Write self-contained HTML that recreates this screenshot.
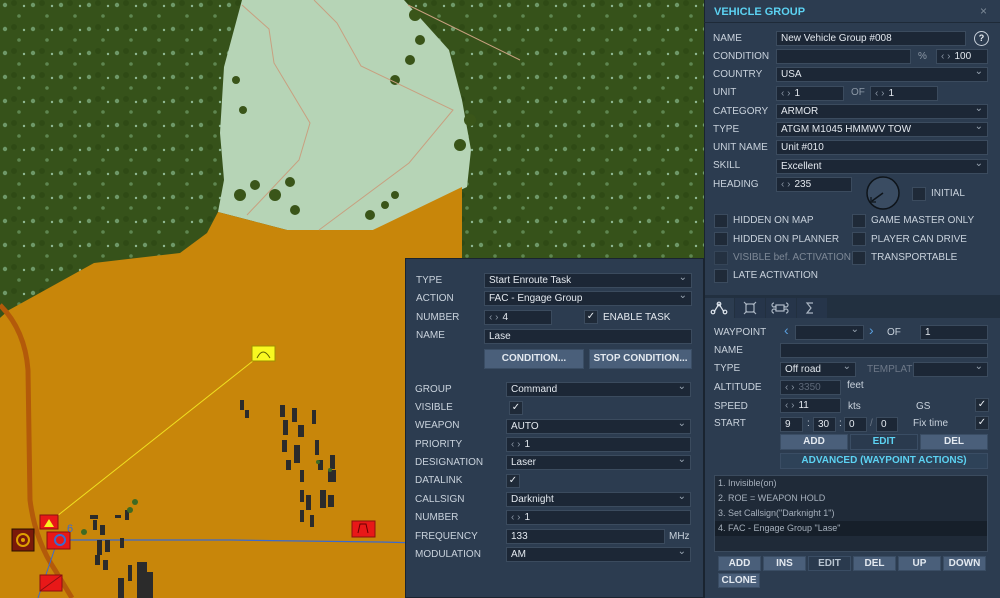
<!DOCTYPE html>
<html><head><meta charset="utf-8"><style>
*{box-sizing:border-box;margin:0;padding:0}
body{width:1000px;height:598px;overflow:hidden;position:relative;font-family:"Liberation Sans",sans-serif;font-size:10px;color:#d6dde6;background:#c8860a}
.a{position:absolute}
.p{position:absolute;background:#2c3c50}
.l{position:absolute;color:#c9d2dc;font-size:10px;line-height:12px;white-space:nowrap}
.f{position:absolute;background:#1c2736;border:1px solid #3b4b5e;height:15px;color:#e4e9ef;font-size:10px;line-height:14px;padding-left:4px;white-space:nowrap;overflow:hidden}
.f.d::after{content:"⌄";position:absolute;right:4px;top:-3px;color:#9aa6b3;font-size:10px}
.s{color:#8c98a6;margin-right:4px}
.cb{position:absolute;width:14px;height:14px;background:#1f2a38;border:1px solid #3b4b5e;color:#e8edf2;font-size:10px;line-height:12px;text-align:center}
.b{position:absolute;background:#4a5f7a;color:#e3e9f0;font-weight:bold;font-size:10px;text-align:center;border:1px solid #3a4d64}
</style></head><body>
<svg class="a" style="left:0;top:0" width="704" height="598">
<defs><pattern id="tr" width="28" height="24" patternUnits="userSpaceOnUse">
<rect width="28" height="24" fill="#36521a"/><circle cx="5" cy="5" r="2.2" fill="#6e9868"/><circle cx="19" cy="16" r="1.8" fill="#5e8650"/><circle cx="14" cy="3" r="3" fill="#2f4a15"/><circle cx="24" cy="6" r="1.2" fill="#8fb893"/></pattern></defs>
<rect width="704" height="598" fill="#c8860a"/>
<polygon points="0,0 704,0 704,258 462,258 462,187 9,310 0,318" fill="url(#tr)"/>
<polygon points="242,0 404,0 449,50 462,100 471,150 467,187 373,230 287,230 218,212 224,180 220,133 224,67" fill="#b6d4b6"/>
<polygon points="0,318 9,310 94,263 180,253 207,233 218,212 287,230 373,230 462,187 462,258 704,258 704,598 0,598" fill="#c8860a"/>
<g fill="#3a5519"><circle cx="240" cy="195" r="6"/><circle cx="255" cy="185" r="5"/><circle cx="275" cy="195" r="6"/><circle cx="290" cy="182" r="5"/><circle cx="295" cy="210" r="5"/><circle cx="370" cy="215" r="5"/><circle cx="385" cy="205" r="4"/><circle cx="395" cy="195" r="4"/><circle cx="415" cy="15" r="6"/><circle cx="420" cy="40" r="5"/><circle cx="410" cy="60" r="5"/><circle cx="395" cy="80" r="5"/><circle cx="470" cy="120" r="6"/><circle cx="460" cy="145" r="6"/><circle cx="243" cy="110" r="4"/><circle cx="236" cy="80" r="4"/></g>
<polyline points="314,0 337,23 361,66 453,110 409,163 319,230" fill="none" stroke="#c8a080" stroke-width="1"/>
<polyline points="242,5 269,29 274,63 310,123 299,160 247,215" fill="none" stroke="#c8a080" stroke-width="1"/>
<polyline points="408,5 520,60" fill="none" stroke="#c8a080" stroke-width="1"/>
<path d="M0,305 Q25,330 28,370 L30,500 Q35,540 55,570 L72,598" fill="none" stroke="#b35a0a" stroke-width="5"/>
<line x1="52" y1="520" x2="258" y2="357" stroke="#f0e020" stroke-width="1"/>
<polyline points="70,540 230,540 300,541 380,542 420,543" fill="none" stroke="#3a6ad0" stroke-width="1.2"/>
<line x1="55" y1="548" x2="38" y2="598" stroke="#3a6ad0" stroke-width="1"/>
<g fill="#2b2b2b"><rect x="240" y="400" width="4" height="10"/><rect x="245" y="410" width="4" height="8"/><rect x="280" y="405" width="5" height="12"/><rect x="292" y="408" width="5" height="14"/><rect x="283" y="420" width="5" height="15"/><rect x="298" y="425" width="6" height="12"/><rect x="282" y="440" width="5" height="12"/><rect x="294" y="445" width="6" height="18"/><rect x="286" y="460" width="5" height="10"/><rect x="300" y="470" width="4" height="12"/><rect x="312" y="410" width="4" height="14"/><rect x="315" y="440" width="4" height="15"/><rect x="318" y="460" width="5" height="10"/><rect x="328" y="470" width="8" height="12"/><rect x="330" y="455" width="5" height="14"/><rect x="300" y="490" width="4" height="12"/><rect x="306" y="495" width="5" height="15"/><rect x="320" y="490" width="6" height="18"/><rect x="328" y="495" width="6" height="12"/><rect x="300" y="510" width="4" height="12"/><rect x="310" y="515" width="4" height="12"/><rect x="90" y="515" width="8" height="4"/><rect x="93" y="520" width="4" height="10"/><rect x="100" y="525" width="5" height="10"/><rect x="97" y="540" width="5" height="15"/><rect x="105" y="540" width="5" height="12"/><rect x="95" y="555" width="5" height="10"/><rect x="103" y="560" width="5" height="10"/><rect x="115" y="515" width="6" height="3"/><rect x="125" y="510" width="4" height="10"/><rect x="120" y="538" width="4" height="10"/><rect x="137" y="562" width="10" height="36"/><rect x="128" y="565" width="4" height="16"/><rect x="118" y="578" width="6" height="20"/><rect x="147" y="572" width="6" height="26"/></g>
<g fill="#3e6a22"><circle cx="135" cy="502" r="3"/><circle cx="130" cy="510" r="3"/><circle cx="84" cy="532" r="3"/><circle cx="330" cy="470" r="2"/><circle cx="318" cy="462" r="2"/></g>
<rect x="252" y="346" width="23" height="15" fill="#f8f820" stroke="#a09000"/><path d="M257,358 Q263,346 270,358" fill="none" stroke="#606000"/>
<rect x="40" y="515" width="18" height="14" fill="#e81818" stroke="#8a1010"/><polygon points="44,527 49,519 54,527" fill="#f8f020"/>
<rect x="47" y="532" width="23" height="17" fill="#e81818" stroke="#8a1010"/><circle cx="60" cy="540" r="5" fill="none" stroke="#3a6ad0" stroke-width="2"/>
<text x="67" y="532" fill="#3a6ad0" font-size="11" font-family="Liberation Sans">6</text>
<rect x="12" y="529" width="22" height="22" fill="#7a1a0a" stroke="#2a1000"/><circle cx="23" cy="540" r="6" fill="none" stroke="#e0a000" stroke-width="2"/><circle cx="23" cy="540" r="2" fill="#e0a000"/>
<rect x="40" y="575" width="22" height="16" fill="#e81818" stroke="#8a1010"/><line x1="40" y1="591" x2="62" y2="575" stroke="#8a1010"/>
<rect x="352" y="521" width="23" height="16" fill="#e81818" stroke="#8a1010"/><path d="M358,533 L360,524 L366,524 L368,533" fill="none" stroke="#600"/>
</svg>

<div class="p" style="left:405px;top:258px;width:299px;height:340px;border:1px solid #1a2430"></div>
<div class="l" style="left:416px;top:275px">TYPE</div><div class="f d" style="left:484px;top:273px;width:208px">Start Enroute Task</div>
<div class="l" style="left:416px;top:293px">ACTION</div><div class="f d" style="left:484px;top:291px;width:208px">FAC - Engage Group</div>
<div class="l" style="left:416px;top:312px">NUMBER</div><div class="f" style="left:484px;top:310px;width:68px"><span class="s">‹ ›</span>4</div>
<div class="cb" style="left:584px;top:310px">✓</div><div class="l" style="left:603px;top:312px;color:#e4e9ef">ENABLE TASK</div>
<div class="l" style="left:416px;top:330px">NAME</div><div class="f" style="left:484px;top:329px;width:208px">Lase</div>
<div class="b" style="left:484px;top:349px;width:100px;height:20px;line-height:18px">CONDITION...</div>
<div class="b" style="left:589px;top:349px;width:103px;height:20px;line-height:18px">STOP CONDITION...</div>
<div class="l" style="left:415px;top:384px">GROUP</div><div class="f d" style="left:506px;top:382px;width:185px">Command</div>
<div class="l" style="left:415px;top:402px">VISIBLE</div><div class="cb" style="left:509px;top:401px">✓</div>
<div class="l" style="left:415px;top:420px">WEAPON</div><div class="f d" style="left:506px;top:419px;width:185px">AUTO</div>
<div class="l" style="left:415px;top:439px">PRIORITY</div><div class="f" style="left:506px;top:437px;width:185px"><span class="s">‹ ›</span>1</div>
<div class="l" style="left:415px;top:457px">DESIGNATION</div><div class="f d" style="left:506px;top:455px;width:185px">Laser</div>
<div class="l" style="left:415px;top:475px">DATALINK</div><div class="cb" style="left:506px;top:474px">✓</div>
<div class="l" style="left:415px;top:494px">CALLSIGN</div><div class="f d" style="left:506px;top:492px;width:185px">Darknight</div>
<div class="l" style="left:415px;top:512px">NUMBER</div><div class="f" style="left:506px;top:510px;width:185px"><span class="s">‹ ›</span>1</div>
<div class="l" style="left:415px;top:531px">FREQUENCY</div><div class="f" style="left:506px;top:529px;width:159px">133</div><div class="l" style="left:669px;top:531px">MHz</div>
<div class="l" style="left:415px;top:549px">MODULATION</div><div class="f d" style="left:506px;top:547px;width:185px">AM</div>

<div class="p" style="left:704px;top:0;width:296px;height:598px;border-left:1px solid #1a2430"></div>
<div class="a" style="left:704px;top:22px;width:296px;height:1px;background:#1e2a38"></div>
<div class="l" style="left:714px;top:6px;color:#5cd2f2;font-weight:bold;font-size:11px">VEHICLE GROUP</div>
<div class="l" style="left:980px;top:5px;color:#7d8a98;font-size:12px">×</div>
<div class="l" style="left:713px;top:33px">NAME</div><div class="f" style="left:776px;top:31px;width:190px">New Vehicle Group #008</div>
<div class="a" style="left:974px;top:31px;width:15px;height:15px;border:1.5px solid #c8d0da;border-radius:50%;color:#e8edf2;font-weight:bold;font-size:9px;text-align:center;line-height:12px">?</div>
<div class="l" style="left:713px;top:51px">CONDITION</div><div class="f" style="left:776px;top:49px;width:135px"></div><div class="l" style="left:918px;top:51px;color:#8c98a6">%</div><div class="f" style="left:936px;top:49px;width:52px"><span class="s">‹ ›</span>100</div>
<div class="l" style="left:713px;top:69px">COUNTRY</div><div class="f d" style="left:776px;top:67px;width:212px">USA</div>
<div class="l" style="left:713px;top:87px">UNIT</div><div class="f" style="left:776px;top:86px;width:68px"><span class="s">‹ ›</span>1</div><div class="l" style="left:851px;top:87px;color:#8c98a6">OF</div><div class="f" style="left:870px;top:86px;width:68px"><span class="s">‹ ›</span>1</div>
<div class="l" style="left:713px;top:106px">CATEGORY</div><div class="f d" style="left:776px;top:104px;width:212px">ARMOR</div>
<div class="l" style="left:713px;top:124px">TYPE</div><div class="f d" style="left:776px;top:122px;width:212px">ATGM M1045 HMMWV TOW</div>
<div class="l" style="left:713px;top:142px">UNIT NAME</div><div class="f" style="left:776px;top:140px;width:212px">Unit #010</div>
<div class="l" style="left:713px;top:160px">SKILL</div><div class="f d" style="left:776px;top:159px;width:212px">Excellent</div>
<div class="l" style="left:713px;top:179px">HEADING</div><div class="f" style="left:776px;top:177px;width:76px"><span class="s">‹ ›</span>235</div>
<svg class="a" style="left:866px;top:176px" width="36" height="36"><circle cx="17" cy="17" r="16" fill="#3a4c62" stroke="#0e141a" stroke-width="1.5"/><line x1="17" y1="17" x2="6" y2="25" stroke="#0e141a" stroke-width="1.5"/><path d="M5,21 L5,26 L10,26" fill="none" stroke="#0e141a" stroke-width="1.2"/></svg>
<div class="cb" style="left:912px;top:187px"></div><div class="l" style="left:931px;top:188px">INITIAL</div>
<div class="cb" style="left:714px;top:214px"></div><div class="l" style="left:733px;top:215px">HIDDEN ON MAP</div>
<div class="cb" style="left:714px;top:232px"></div><div class="l" style="left:733px;top:234px">HIDDEN ON PLANNER</div>
<div class="cb" style="left:714px;top:251px;opacity:.6"></div><div class="l" style="left:733px;top:252px;color:#7d8896">VISIBLE bef. ACTIVATION</div>
<div class="cb" style="left:714px;top:269px"></div><div class="l" style="left:733px;top:270px">LATE ACTIVATION</div>
<div class="cb" style="left:852px;top:214px"></div><div class="l" style="left:871px;top:215px">GAME MASTER ONLY</div>
<div class="cb" style="left:852px;top:232px"></div><div class="l" style="left:871px;top:234px">PLAYER CAN DRIVE</div>
<div class="cb" style="left:852px;top:251px"></div><div class="l" style="left:871px;top:252px">TRANSPORTABLE</div>
<div class="a" style="left:705px;top:295px;width:295px;height:23px;background:#223040"></div>
<div class="a" style="left:705px;top:298px;width:29px;height:20px;background:#2c3c50"></div>
<div class="a" style="left:735px;top:298px;width:30px;height:20px;background:#26354a"></div>
<div class="a" style="left:766px;top:298px;width:30px;height:20px;background:#26354a"></div>
<div class="a" style="left:797px;top:298px;width:30px;height:20px;background:#26354a"></div>
<svg class="a" style="left:705px;top:298px" width="124" height="20"><g fill="none" stroke="#dde4ec" stroke-width="1.2"><path d="M9,14 L14,6 L19,14"/><circle cx="8" cy="14" r="1.8"/><circle cx="20" cy="14" r="1.8"/><circle cx="14" cy="6" r="1.8"/></g><g fill="none" stroke="#aab5c2" stroke-width="1.2"><rect x="41" y="6" width="8" height="8"/><path d="M39,4 L42,7 M51,4 L48,7 M39,16 L42,13 M51,16 L48,13"/><path d="M71,7 H79 V13 H71 Z M71,7 a2,2 0 1 1 -2,-2 M79,7 a2,2 0 1 0 2,-2 M71,13 a2,2 0 1 0 -2,2 M79,13 a2,2 0 1 1 2,2"/><path d="M108,5 H102 L106,10 L102,15 H108"/></g></svg>
<div class="l" style="left:714px;top:327px">WAYPOINT</div><div class="l" style="left:784px;top:324px;color:#5aa0e0;font-size:14px">‹</div><div class="f d" style="left:795px;top:325px;width:69px"></div><div class="l" style="left:869px;top:324px;color:#5aa0e0;font-size:14px">›</div><div class="l" style="left:887px;top:327px">OF</div><div class="f" style="left:920px;top:325px;width:68px">1</div>
<div class="l" style="left:714px;top:345px">NAME</div><div class="f" style="left:780px;top:343px;width:208px"></div>
<div class="l" style="left:714px;top:363px">TYPE</div><div class="f d" style="left:780px;top:362px;width:76px">Off road</div><div class="l" style="left:867px;top:364px;color:#6d7888">TEMPLATE</div><div class="f d" style="left:913px;top:362px;width:75px"></div>
<div class="l" style="left:714px;top:382px">ALTITUDE</div><div class="f" style="left:780px;top:380px;width:61px;color:#5d6878"><span class="s">‹ ›</span>3350</div><div class="l" style="left:847px;top:380px">feet</div>
<div class="l" style="left:714px;top:401px">SPEED</div><div class="f" style="left:780px;top:398px;width:61px"><span class="s">‹ ›</span>11</div><div class="l" style="left:848px;top:401px">kts</div><div class="l" style="left:916px;top:401px">GS</div><div class="cb" style="left:975px;top:398px">✓</div>
<div class="l" style="left:714px;top:418px">START</div>
<div class="f" style="left:780px;top:417px;width:23px">9</div><div class="l" style="left:807px;top:418px">:</div><div class="f" style="left:813px;top:417px;width:23px">30</div><div class="l" style="left:839px;top:418px">:</div><div class="f" style="left:844px;top:417px;width:23px">0</div><div class="l" style="left:870px;top:418px;color:#6d7888">/</div><div class="f" style="left:876px;top:417px;width:22px">0</div><div class="l" style="left:913px;top:418px">Fix time</div><div class="cb" style="left:975px;top:416px">✓</div>
<div class="b" style="left:780px;top:434px;width:68px;height:16px;line-height:14px">ADD</div>
<div class="b" style="left:850px;top:434px;width:68px;height:16px;line-height:14px;background:#2a3a4e;color:#5cd2f2">EDIT</div>
<div class="b" style="left:920px;top:434px;width:68px;height:16px;line-height:14px">DEL</div>
<div class="b" style="left:780px;top:453px;width:208px;height:16px;line-height:14px;background:#2e4258;color:#5cd2f2">ADVANCED (WAYPOINT ACTIONS)</div>
<div class="a" style="left:714px;top:475px;width:274px;height:77px;background:#1f2a38;border:1px solid #3b4b5e"></div>
<div class="l" style="left:718px;top:477px;color:#a6b0bc;font-size:9px">1. Invisible(on)</div>
<div class="l" style="left:718px;top:492px;color:#a6b0bc;font-size:9px">2. ROE = WEAPON HOLD</div>
<div class="l" style="left:718px;top:507px;color:#a6b0bc;font-size:9px">3. Set Callsign("Darknight 1")</div>
<div class="a" style="left:715px;top:521px;width:272px;height:15px;background:#161f2a"></div>
<div class="l" style="left:718px;top:522px;color:#a6b0bc;font-size:9px">4. FAC - Engage Group "Lase"</div>
<div class="b" style="left:718px;top:556px;width:43px;height:15px;line-height:13px">ADD</div>
<div class="b" style="left:763px;top:556px;width:43px;height:15px;line-height:13px">INS</div>
<div class="b" style="left:808px;top:556px;width:43px;height:15px;line-height:13px;background:#2a3a4e;color:#b8c4d0">EDIT</div>
<div class="b" style="left:853px;top:556px;width:43px;height:15px;line-height:13px">DEL</div>
<div class="b" style="left:898px;top:556px;width:43px;height:15px;line-height:13px">UP</div>
<div class="b" style="left:943px;top:556px;width:43px;height:15px;line-height:13px">DOWN</div>
<div class="b" style="left:718px;top:573px;width:42px;height:15px;line-height:13px">CLONE</div>
</body></html>
